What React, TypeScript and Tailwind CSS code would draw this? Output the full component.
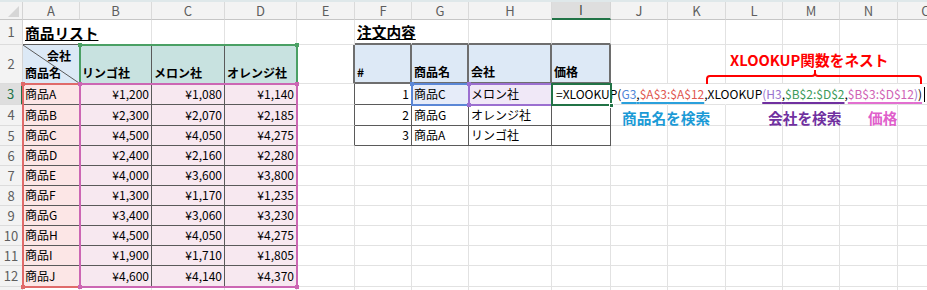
import React from 'react';

const products: [string, number, number, number][] = [
  ['A', 1200, 1080, 1140],
  ['B', 2300, 2070, 2185],
  ['C', 4500, 4050, 4275],
  ['D', 2400, 2160, 2280],
  ['E', 4000, 3600, 3800],
  ['F', 1300, 1170, 1235],
  ['G', 3400, 3060, 3230],
  ['H', 4500, 4050, 4275],
  ['I', 1900, 1710, 1805],
  ['J', 4600, 4140, 4370],
];
const orders: [number, string, string][] = [
  [1, '商品C', 'メロン社'],
  [2, '商品G', 'オレンジ社'],
  [3, '商品A', 'リンゴ社'],
];
const letters = ['', 'A', 'B', 'C', 'D', 'E', 'F', 'G', 'H', 'I', 'J', 'K', 'L', 'M', 'N', 'O'];
const companies = ['', '', 'リンゴ社', 'メロン社', 'オレンジ社'];
const orderHeads: Record<number, string> = { 6: '#', 7: '商品名', 8: '会社', 9: '価格' };

const yen = (n: number) => '¥' + n.toLocaleString('en-US');

function cellClass(r: number, c: number): string {
  if (r === 0) {
    if (c === 0) return 'relative bg-[#f3f3f3] border-r border-b border-r-[#d4d4d4] border-b-[#c6c6c6]';
    if (c === 9)
      return 'flex items-center justify-center bg-[#dedede] text-[#3d4a42] border-r border-b-2 border-r-[#d4d4d4] border-b-[#217346] text-[13px]';
    return 'flex items-center justify-center bg-[#f3f3f3] text-[#5e5e5e] border-r border-b border-r-[#dadada] border-b-[#c6c6c6] text-[13px]';
  }
  if (c === 0) {
    if (r === 3)
      return 'flex items-center justify-center bg-[#dedede] text-[#217346] border-r-2 border-b border-r-[#217346] border-b-[#dcdcdc] text-[13px]';
    return 'flex items-center justify-center bg-[#f3f3f3] text-[#5e5e5e] border-r border-b border-r-[#d4d4d4] border-b-[#dcdcdc] text-[13px]';
  }

  const parts: string[] = ['relative flex min-w-0 text-[12px] text-black'];

  if (r === 2 && c === 1) parts.push('bg-[#dce9f6]');
  else if (r === 2 && c >= 2 && c <= 4) parts.push('bg-[#c8e2e0]');
  else if (r >= 3 && r <= 12 && c === 1) parts.push('bg-[#fce6e6]');
  else if (r >= 3 && r <= 12 && c >= 2 && c <= 4) parts.push('bg-[#f7e8f0]');
  else if (r === 2 && c >= 6 && c <= 9) parts.push('bg-[#dde9f6]');
  else if (r === 3 && c === 7) parts.push('bg-[#e6ecf9]');
  else if (r === 3 && c === 8) parts.push('bg-[#f0e8f7]');
  else parts.push('bg-white');

  if (r >= 2 && r <= 12 && c >= 1 && c <= 4) parts.push('border-r border-r-[#5a5a5a]');
  else if (r === 2 && c >= 5 && c <= 9) parts.push('border-r-2 border-r-[#6e6e6e]');
  else if (r >= 3 && r <= 5 && c >= 5 && c <= 9) parts.push('border-r border-r-[#5a5a5a]');
  else if (r === 3 && c >= 10) parts.push('border-r border-r-transparent');
  else if (r === 1 && (c === 1 || c === 6)) parts.push('border-r border-r-transparent');
  else parts.push('border-r border-r-[#e2e2e2]');

  if (r >= 1 && r <= 12 && c >= 1 && c <= 4) parts.push('border-b border-b-[#5a5a5a]');
  else if ((r === 1 || r === 2) && c >= 6 && c <= 9) parts.push('border-b-2 border-b-[#6e6e6e]');
  else if (r >= 3 && r <= 5 && c >= 6 && c <= 9) parts.push('border-b border-b-[#5a5a5a]');
  else parts.push('border-b border-b-[#e2e2e2]');

  if (r === 1) parts.push('items-end pl-[2px] pb-[2px]');
  else if (r === 2) parts.push('items-end pl-[2px] pb-[1px] font-bold');
  else if (r === 3 && c === 9) parts.push('items-end pl-[4px] pb-[1px]');
  else if ((c >= 2 && c <= 4) || c === 6) parts.push('items-end justify-end pr-[2px] pb-[1px]');
  else parts.push('items-end pl-[2px] pb-[1px]');

  return parts.join(' ');
}

function Formula() {
  return (
    <span className="relative z-10 whitespace-nowrap flex items-center">
      <span>=XLOOKUP(</span>
      <span className="underline decoration-2 underline-offset-[3px] decoration-[#2aa0dc]">
        <span className="text-[#4e86d8]">G3</span>
        <span>,</span>
        <span className="text-[#e0574f]">$A$3:$A$12</span>
      </span>
      <span>,XLOOKUP</span>
      <span className="underline decoration-2 underline-offset-[3px] decoration-[#7030a0]">
        <span className="text-[#9a72cf]">(H3</span>
        <span>,</span>
        <span className="text-[#3c9a5a]">$B$2:$D$2</span>
      </span>
      <span>,</span>
      <span className="underline decoration-2 underline-offset-[3px] decoration-[#e26fd0]">
        <span className="text-[#cf62b5]">$B$3:$D$12</span>
        <span className="text-[#9a72cf]">)</span>
        <span>)</span>
      </span>
      <span className="inline-block w-[1px] h-[15px] bg-black ml-[2px]" />
    </span>
  );
}

function content(r: number, c: number): React.ReactNode {
  if (r === 0) {
    if (c === 0)
      return (
        <svg className="absolute left-0 top-0" width="23" height="18" viewBox="0 0 23 18">
          <polygon points="19,4 19,15 8,15" fill="#d6d6d6" />
        </svg>
      );
    return letters[c];
  }
  if (c === 0) return r;
  if (r === 1 && c === 1)
    return <span className="relative z-10 whitespace-nowrap font-bold underline text-[14.7px] leading-[18px]">商品リスト</span>;
  if (r === 1 && c === 6)
    return <span className="relative z-10 whitespace-nowrap font-bold underline text-[14.7px] leading-[18px]">注文内容</span>;
  if (r === 2 && c === 1)
    return (
      <>
        <svg className="absolute left-0 top-0" width="57" height="39" viewBox="0 0 57 39">
          <line x1="0" y1="0" x2="56" y2="38" stroke="#5a5a5a" strokeWidth="1" />
        </svg>
        <span className="absolute right-[8px] top-[2px]">会社</span>
        <span className="relative">商品名</span>
      </>
    );
  if (r === 2 && c >= 2 && c <= 4) return <span className="whitespace-nowrap">{companies[c]}</span>;
  if (r === 2 && orderHeads[c]) return <span className="whitespace-nowrap">{orderHeads[c]}</span>;
  if (r >= 3 && r <= 12) {
    const p = products[r - 3];
    if (c === 1) return <span className="whitespace-nowrap">商品{p[0]}</span>;
    if (c >= 2 && c <= 4) return <span className="whitespace-nowrap">{yen(p[c - 1])}</span>;
  }
  if (r >= 3 && r <= 5) {
    const o = orders[r - 3];
    if (c === 6) return o[0];
    if (c === 7) return <span className="whitespace-nowrap">{o[1]}</span>;
    if (c === 8) return <span className="whitespace-nowrap">{o[2]}</span>;
    if (c === 9 && r === 3) return <Formula />;
  }
  return null;
}

function Corner({ cls }: { cls: string }) {
  return <span className={`absolute w-[4px] h-[4px] ${cls}`} />;
}

export default function App() {
  const cells: React.ReactNode[] = [];
  for (let r = 0; r < 14; r++) {
    for (let c = 0; c < 16; c++) {
      cells.push(
        <div key={`${r}-${c}`} className={cellClass(r, c)}>
          {content(r, c)}
        </div>
      );
    }
  }
  return (
    <div className="w-[927px] h-[290px] overflow-hidden bg-white font-['Noto_Sans_CJK_JP','Noto_Sans',sans-serif]">
      <div className="h-[2px] bg-[#dfe8ea]" />
      <div className="relative grid w-max grid-cols-[23px_57px_72px_73px_72px_58px_57px_57px_83px_59px_57px_58px_57px_57px_58px_57px] grid-rows-[18px_25px_39px_21px_21px_20px_20px_20px_20px_20px_20px_20px_21px_20px]">
        {cells}

        {/* range highlights drawn over the cells */}
        <div className="absolute left-[22px] top-[81px] w-[59px] h-[205px] border-2 border-[#e06a6a] z-20">
          <Corner cls="-left-[3px] -top-[3px] bg-[#e06a6a]" />
          <Corner cls="-left-[3px] -bottom-[3px] bg-[#e06a6a]" />
        </div>
        <div className="absolute left-[79px] top-[42px] w-[219px] h-[41px] border-2 border-[#4aa064] z-20">
          <Corner cls="-left-[3px] -top-[3px] bg-[#4aa064]" />
          <Corner cls="-right-[3px] -top-[3px] bg-[#4aa064]" />
        </div>
        <div className="absolute left-[79px] top-[81px] w-[219px] h-[205px] border-2 border-[#cc66b3] z-20">
          <Corner cls="-left-[3px] -top-[3px] bg-[#cc66b3]" />
          <Corner cls="-right-[3px] -top-[3px] bg-[#cc66b3]" />
          <Corner cls="-left-[3px] -bottom-[3px] bg-[#cc66b3]" />
          <Corner cls="-right-[3px] -bottom-[3px] bg-[#cc66b3]" />
        </div>
        <div className="absolute left-[411px] top-[81px] w-[59px] h-[23px] border-2 border-[#5b87d6] z-20">
          <Corner cls="-left-[3px] -top-[3px] bg-[#5b87d6]" />
          <Corner cls="-right-[3px] -bottom-[3px] bg-[#5b87d6]" />
        </div>
        <div className="absolute left-[468px] top-[81px] w-[85px] h-[23px] border-2 border-[#9b6fd0] z-20">
          <Corner cls="-left-[3px] -top-[3px] bg-[#9b6fd0]" />
          <Corner cls="-left-[3px] -bottom-[3px] bg-[#9b6fd0]" />
        </div>
        <div className="absolute left-[551px] top-[81px] w-[61px] h-[23px] border-2 border-[#217346] z-20">
          <span className="absolute -right-[4px] -bottom-[4px] w-[5px] h-[5px] bg-[#217346] border border-white" />
        </div>

        {/* annotations drawn over the sheet */}
        <span className="absolute left-[730px] top-[51px] z-30 whitespace-nowrap text-[14.7px] font-bold leading-none text-[#ff0000]">
          XLOOKUP関数をネスト
        </span>
        <svg className="absolute left-[705px] top-[66px] z-30" width="220" height="18" viewBox="0 0 220 18">
          <path
            d="M2 16 V11 Q2 8 5 8 H107 Q110 8 110 5 V2 M110 5 Q110 8 113 8 H213 Q216 8 216 11 V16"
            fill="none"
            stroke="#ff0000"
            strokeWidth="2"
          />
        </svg>
        <span className="absolute left-[622px] top-[109px] z-30 whitespace-nowrap text-[14.7px] font-bold leading-none text-[#1b9ad6]">
          商品名を検索
        </span>
        <span className="absolute left-[768px] top-[109px] z-30 whitespace-nowrap text-[14.7px] font-bold leading-none text-[#7030a0]">
          会社を検索
        </span>
        <span className="absolute left-[868px] top-[109px] z-30 whitespace-nowrap text-[14.7px] font-bold leading-none text-[#df5fcb]">
          価格
        </span>
      </div>
    </div>
  );
}
